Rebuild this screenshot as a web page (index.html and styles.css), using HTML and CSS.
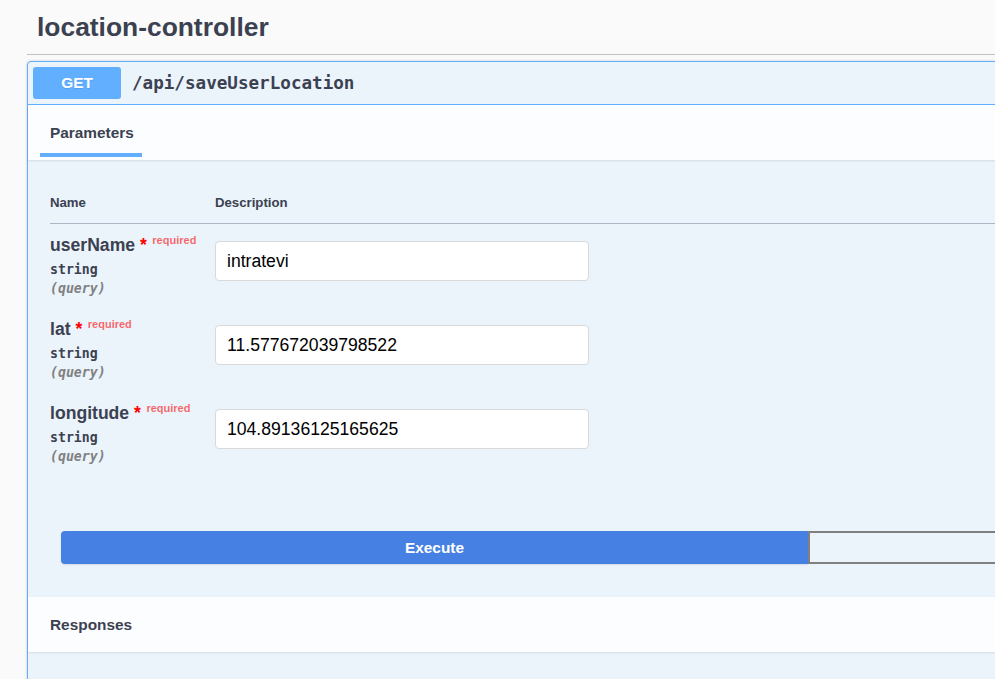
FILE: index.html
```html
<!DOCTYPE html>
<html>
<head>
<meta charset="utf-8">
<link rel="stylesheet" href="styles.css">
</head>
<body>
<div class="page">
  <div class="tag-header"><h3 class="tag-title">location-controller</h3></div>
  <div class="opblock">
    <div class="summary">
      <span class="method">GET</span>
      <span class="path">/api/saveUserLocation</span>
    </div>
    <div class="section-header">
      <div class="tab">Parameters</div>
    </div>
    <div class="params">
      <div class="params-head">
        <div class="col-name">Name</div>
        <div class="col-desc">Description</div>
      </div>
      <div class="prow">
        <div class="col-name">
          <div class="pname">userName<span class="star">&nbsp;*</span><span class="req">required</span></div>
          <div class="ptype">string</div>
          <div class="pin">(query)</div>
        </div>
        <div class="col-desc"><input class="pinput" type="text" value="intratevi"></div>
      </div>
      <div class="prow">
        <div class="col-name">
          <div class="pname">lat<span class="star">&nbsp;*</span><span class="req">required</span></div>
          <div class="ptype">string</div>
          <div class="pin">(query)</div>
        </div>
        <div class="col-desc"><input class="pinput" type="text" value="11.577672039798522"></div>
      </div>
      <div class="prow">
        <div class="col-name">
          <div class="pname">longitude<span class="star">&nbsp;*</span><span class="req">required</span></div>
          <div class="ptype">string</div>
          <div class="pin">(query)</div>
        </div>
        <div class="col-desc"><input class="pinput" type="text" value="104.89136125165625"></div>
      </div>
    </div>
    <div class="exec">
      <div class="btn-group">
        <button class="btn-execute">Execute</button>
        <button class="btn-clear">Clear</button>
      </div>
    </div>
    <div class="responses-header">Responses</div>
    <div class="responses-body"></div>
  </div>
</div>
</body>
</html>
```
FILE: styles.css
```css
html, body {
  margin: 0;
  padding: 0;
  overflow: hidden;
  background: #fafafa;
}
body {
  font-family: "Liberation Sans", Arial, sans-serif;
  color: #3b4151;
}
.page {
  width: 1640px;
  padding-left: 27px;
}
.tag-header {
  height: 54px;
  border-bottom: 1px solid rgba(59, 65, 81, 0.3);
  box-sizing: content-box;
}
.tag-title {
  margin: 0;
  padding: 12px 0 0 10px;
  font-size: 26.4px;
  line-height: 30px;
  font-weight: bold;
}
.opblock {
  margin-top: 6px;
  border: 1px solid #61affe;
  border-radius: 4px;
  background: #ebf3fb;
  box-shadow: 0 0 3px rgba(0, 0, 0, 0.19);
}
.summary {
  display: flex;
  align-items: center;
  padding: 5px;
  border-bottom: 1px solid #61affe;
}
.method {
  width: 88px;
  height: 32px;
  flex: none;
  display: flex;
  align-items: center;
  justify-content: center;
  background: #61affe;
  border-radius: 3px;
  color: #fff;
  font-size: 15.4px;
  font-weight: bold;
  text-shadow: 0 1px 0 rgba(0, 0, 0, 0.1);
}
.path {
  margin-left: 11px;
  font-family: "DejaVu Sans Mono", monospace;
  font-weight: bold;
  font-size: 17.6px;
  color: #3b4151;
}
.section-header {
  height: 55px;
  padding-left: 12px;
  background: rgba(255, 255, 255, 0.8);
  box-shadow: 0 1px 2px rgba(0, 0, 0, 0.1);
  display: flex;
  box-sizing: border-box;
}
.tab {
  width: 102px;
  padding: 19px 0 11px 10px;
  height: 52px;
  box-sizing: border-box;
  font-size: 15.4px;
  line-height: 18px;
  font-weight: bold;
  border-bottom: 4px solid #61affe;
}
.params {
  padding: 35px 0 0 22px;
}
.params-head {
  display: flex;
  font-size: 13.2px;
  line-height: 16px;
  font-weight: bold;
  padding-bottom: 12px;
  border-bottom: 1px solid #aeb6c5;
}
.col-name {
  width: 165px;
  flex: none;
}
.col-desc {
  flex: 1;
}
.prow {
  display: flex;
  height: 84px;
  padding-top: 11px;
  box-sizing: border-box;
}
.pname {
  font-size: 17.6px;
  line-height: 20px;
  font-weight: bold;
  white-space: nowrap;
}
.star {
  color: #f00;
}
.req {
  font-size: 11px;
  line-height: 0;
  font-weight: bold;
  color: rgba(255, 0, 0, 0.6);
  padding-left: 5.5px;
  vertical-align: 6.6px;
}
.ptype {
  margin-top: 8px;
  padding-bottom: 5px;
  font-family: "DejaVu Sans Mono", monospace;
  font-size: 13.2px;
  line-height: 14px;
  font-weight: bold;
}
.pin {
  font-family: "DejaVu Sans Mono", monospace;
  font-size: 13.2px;
  line-height: 14px;
  font-style: italic;
  font-weight: bold;
  color: #808080;
}
.pinput {
  display: block;
  margin-top: 6px;
  width: 374px;
  height: 40px;
  box-sizing: border-box;
  padding: 0 11px;
  border: 1px solid #d9d9d9;
  border-radius: 4px;
  background: #fff;
  font-family: "Liberation Sans", Arial, sans-serif;
  font-size: 17.6px;
  color: #000;
  outline: none;
}
.exec {
  padding: 55px 0 33px 33px;
}
.btn-group {
  display: flex;
}
.btn-execute {
  flex: none;
  width: 747px;
  height: 33px;
  border: none;
  border-radius: 4px 0 0 4px;
  background: #4680e3;
  color: #fff;
  font-family: "Liberation Sans", Arial, sans-serif;
  font-size: 15.4px;
  font-weight: bold;
  box-shadow: 0 1px 2px rgba(0, 0, 0, 0.1);
}
.btn-clear {
  flex: none;
  width: 747px;
  height: 33px;
  border: 2px solid #808080;
  border-radius: 0 4px 4px 0;
  background: transparent;
  color: #3b4151;
  font-family: "Liberation Sans", Arial, sans-serif;
  font-size: 15.4px;
  font-weight: bold;
}
.responses-header {
  height: 55px;
  box-sizing: border-box;
  padding: 19px 0 0 22px;
  font-size: 15.4px;
  line-height: 18px;
  font-weight: bold;
  background: rgba(255, 255, 255, 0.8);
  box-shadow: 0 1px 2px rgba(0, 0, 0, 0.1);
}
.responses-body {
  height: 120px;
}
```
